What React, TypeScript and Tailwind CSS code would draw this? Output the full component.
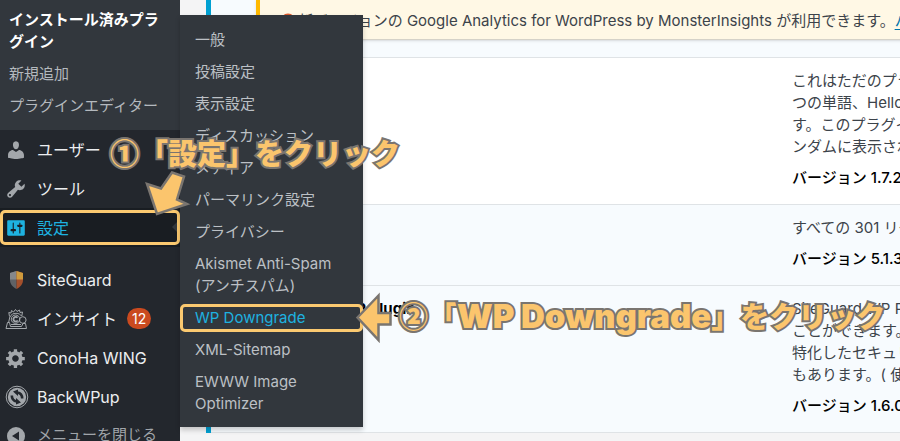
import type { ReactNode } from "react";

const glyphs = {
  user: "M10 9.25c-2.27 0-2.73-3.44-2.73-3.44C7 4.02 7.82 2 9.97 2c2.16 0 2.98 2.02 2.71 3.81 0 0-.41 3.44-2.68 3.44zm0 2.57L12.72 10c2.39 0 4.52 2.33 4.52 4.53v2.49s-3.65 1.13-7.24 1.13c-3.65 0-7.24-1.13-7.24-1.13v-2.49c0-2.25 1.94-4.48 4.47-4.48z",
  tools:
    "M16.68 9.77c-1.34 1.34-3.3 1.67-4.95.99l-5.41 6.52c-.99.99-2.59.99-3.58 0s-.99-2.59 0-3.57l6.52-5.42c-.68-1.65-.35-3.61.99-4.95 1.28-1.28 3.12-1.62 4.72-1.06l-2.89 2.89 2.82 2.82 2.86-2.87c.53 1.58.18 3.39-1.08 4.65zM3.81 16.21c.4.39 1.04.39 1.43 0 .4-.4.4-1.04 0-1.43-.39-.4-1.03-.4-1.43 0-.39.39-.39 1.03 0 1.43z",
  settings:
    "M18 16V4c0-.55-.45-1-1-1H3c-.55 0-1 .45-1 1v12c0 .55.45 1 1 1h14c.55 0 1-.45 1-1zM8 11h1c.55 0 1 .45 1 1s-.45 1-1 1H8v1.5c0 .28-.22.5-.5.5s-.5-.22-.5-.5V13H6c-.55 0-1-.45-1-1s.45-1 1-1h1V5.5c0-.28.22-.5.5-.5s.5.22.5.5V11zm5-2h-1c-.55 0-1-.45-1-1s.45-1 1-1h1V5.5c0-.28.22-.5.5-.5s.5.22.5.5V7h1c.55 0 1 .45 1 1s-.45 1-1 1h-1v5.5c0 .28-.22.5-.5.5s-.5-.22-.5-.5V9z",
  gear: "M18 12h-2.18c-.17.7-.44 1.35-.81 1.93l1.54 1.54-2.1 2.1-1.54-1.54c-.58.36-1.23.63-1.91.79V19H8v-2.18c-.68-.16-1.33-.43-1.91-.79l-1.54 1.54-2.12-2.12 1.54-1.54c-.36-.58-.63-1.23-.79-1.91H1V9.03h2.17c.16-.7.44-1.35.8-1.94L2.43 5.55l2.1-2.1 1.54 1.54c.58-.37 1.24-.64 1.93-.81V2h3v2.18c.68.16 1.33.43 1.91.79l1.54-1.54 2.12 2.12-1.54 1.54c.36.59.64 1.24.8 1.94H18V12zm-8.5 1.5c1.66 0 3-1.34 3-3s-1.34-3-3-3-3 1.34-3 3 1.34 3 3 3z",
};

function Glyph({ d }: { d: string }) {
  return (
    <svg viewBox="0 0 20 20" className="size-[22px]" fill="currentColor" fillRule="evenodd" aria-hidden="true">
      <path d={d} />
    </svg>
  );
}

function ShieldIcon() {
  return (
    <svg viewBox="0 0 22 22" className="size-[22px]" aria-hidden="true">
      <path d="M5 4 11.500 2v18C7.500 18 5 15 5 11Z" fill="#5f6266" />
      <path d="M5 4l6.500-2v8.500H5Z" fill="#85878a" />
      <path d="M11.500 2 18 4v7c0 4-2.500 7-6.500 9Z" fill="#a4502c" />
      <path d="M11.500 2 18 4v6.500h-6.500Z" fill="#cf9a3c" />
    </svg>
  );
}

function MonsterIcon() {
  return (
    <svg viewBox="0 0 22 22" className="size-[22px]" fill="none" stroke="currentColor" strokeWidth="1" strokeLinejoin="round" aria-hidden="true">
      <path d="M4.500 8.500 3.800 4.500 6 5l.5-2.500 2 1.500L10.500 1.500l1.500 2 2.500-1.500.5 2.500 2.500-.5-.7 4" />
      <path d="M5 9c1-2.500 3.200-3.700 6-3.700S15.500 6.500 16.500 8" />
      <circle cx="10.500" cy="11.200" r="4.200" />
      <path d="M12.500 9.800a2.300 2.300 0 1 0 .2 2.600" strokeWidth="1.800" />
      <circle cx="17.800" cy="12" r="3.300" />
      <path d="M4.800 9 3.500 15M1 20.500l1.500-6h2l1 4h11l1.500-3h2.500l1 5Z" />
      <path d="M6 16.500h10" />
    </svg>
  );
}

function BackupIcon() {
  return (
    <svg viewBox="0 0 24 24" className="size-[24px]" aria-hidden="true">
      <circle cx="12" cy="12" r="10.800" fill="none" stroke="currentColor" strokeWidth="1" />
      <circle cx="12" cy="12" r="9.200" fill="currentColor" />
      <g fill="none" stroke="#23272d" strokeWidth="2.600">
        <path d="M6.800 10.500c0 3 2 5.500 5 6" />
        <path d="M17.200 13.500c0-3-2-5.500-5-6" />
      </g>
      <path d="M11 13v6.500l5-2zM13 11V4.500l-5 2z" fill="#23272d" />
    </svg>
  );
}

function CollapseIcon() {
  return (
    <svg viewBox="0 0 22 22" className="size-[22px]" aria-hidden="true">
      <circle cx="11" cy="11" r="9" fill="currentColor" />
      <path d="M14 6.500v9L7 11Z" fill="#23272d" />
    </svg>
  );
}

type MenuRowProps = { icon: ReactNode; label: string; tone?: string; children?: ReactNode };

function MenuRow({ icon, label, tone = "text-base text-[#eceef0]", children }: MenuRowProps) {
  return (
    <li>
      <a href="#" className={`flex h-[39px] items-center pl-[5px] whitespace-nowrap ${tone}`}>
        <span className="flex w-8 shrink-0 items-center pr-2 text-[#a3a7ab]">{icon}</span>
        {label}
        {children}
      </a>
    </li>
  );
}

const optionPages = [
  "一般",
  "投稿設定",
  "表示設定",
  "ディスカッション",
  "メディア",
  "パーマリンク設定",
  "プライバシー",
  "Akismet Anti-Spam (アンチスパム)",
  "WP Downgrade",
  "XML-Sitemap",
  "EWWW Image Optimizer",
];

const highlight = "pointer-events-none absolute inset-x-0 inset-y-[2px] rounded-[5px] border-[3px] border-[#fbc970]";

function SettingsFlyout() {
  return (
    <ul className="absolute top-[15px] left-[180px] z-10 w-[183px] bg-[#32373d] pt-[9px] pb-[7px] text-[#bcc0c5] shadow-[0_3px_5px_rgba(0,0,0,0.2)]">
      {optionPages.map((page) => (
        <li key={page} className="relative">
          <a
            href="#"
            className={`block px-[15px] py-[5px] leading-[22px] ${page === "WP Downgrade" ? "text-[#1eb2e0]" : ""}`}
          >
            {page}
          </a>
          {page === "WP Downgrade" && <span className={highlight} />}
        </li>
      ))}
    </ul>
  );
}

function Sidebar() {
  return (
    <nav className="w-[180px] shrink-0 bg-[#23272d]">
      <ul className="bg-[#32373d] pt-1 pb-2 text-[#b4b9be]">
        <li>
          <a href="#" className="block px-[9px] py-[5px] leading-[22px] font-bold text-white">
            インストール済みプラグイン
          </a>
        </li>
        <li>
          <a href="#" className="block px-[9px] py-[5px] leading-[22px]">新規追加</a>
        </li>
        <li>
          <a href="#" className="block px-[9px] py-[5px] leading-[22px]">プラグインエディター</a>
        </li>
      </ul>
      <ul>
        <MenuRow icon={<Glyph d={glyphs.user} />} label="ユーザー" />
        <MenuRow icon={<Glyph d={glyphs.tools} />} label="ツール" />
        <li className="relative bg-[#191d22]">
          <a href="#" className="flex h-[39px] items-center pl-[5px] text-base text-[#1eb2e0]">
            <span className="w-8">
              <Glyph d={glyphs.settings} />
            </span>
            設定
          </a>
          <span className="absolute top-[11px] right-0 border-y-8 border-r-8 border-y-transparent border-r-[#32373d]" />
          <span className={highlight} />
        </li>
      </ul>
      <ul className="mt-[13px]">
        <MenuRow icon={<ShieldIcon />} label="SiteGuard" />
        <MenuRow icon={<MonsterIcon />} label="インサイト">
          <span className="ml-[10px] rounded-full bg-[#ca4a1f] px-[5px] text-sm leading-[21px] text-white">12</span>
        </MenuRow>
        <MenuRow icon={<Glyph d={glyphs.gear} />} label="ConoHa WING" />
        <MenuRow icon={<BackupIcon />} label="BackWPup" />
        <MenuRow icon={<CollapseIcon />} label="メニューを閉じる" tone="text-[15px] text-[#a0a5aa]" />
      </ul>
    </nav>
  );
}

type PluginRowProps = { name: string; lines: string[]; version: string; active?: boolean };

function PluginRow({ name, lines, version, active }: PluginRowProps) {
  return (
    <tr className={`border-b border-[#dfe3e6] align-top ${active ? "bg-[#f7fbfe]" : "bg-white"}`}>
      <td className={`border-l-[5px] ${active ? "border-l-[#00a0d2]" : "border-l-white"}`} />
      <th scope="row" className="pt-3 text-left leading-[22px] font-bold text-black">
        {name}
      </th>
      <td className="pt-3 pb-[15px] leading-[22px] whitespace-nowrap text-[#3c434a]">
        {lines.map((line) => (
          <p key={line}>{line}</p>
        ))}
        <p className="mt-[9px] font-medium text-black">{version}</p>
      </td>
    </tr>
  );
}

function PluginTable() {
  return (
    <main className="min-w-0 flex-1 overflow-hidden bg-[#f4f4f5] pl-[26px]">
      <div className="flex h-[58px] items-start border-b border-l-[5px] border-b-[#dfe3e6] border-l-[#00a0d2] bg-[#f7fbfe] pl-[45px]">
        <div className="flex h-10 flex-1 items-center border-b border-l-4 border-b-[#d5d2c8] border-l-[#ffb900] bg-[#fff8e5] pt-[3px] pl-5 whitespace-nowrap text-[#3c434a] shadow-sm">
          <svg viewBox="0 0 16 16" className="mr-[2px] size-4 shrink-0" aria-hidden="true">
            <circle cx="8" cy="8" r="6" fill="none" stroke="#dd5a2c" strokeWidth="3" />
          </svg>
          <p>
            新バージョンの Google Analytics for WordPress by MonsterInsights が利用できます。
            <a href="#" className="text-[#0073aa] underline underline-offset-3">バージョン</a>
          </p>
        </div>
      </div>
      <table className="w-full table-fixed border-collapse">
        <colgroup>
          <col className="w-[56px]" />
          <col />
          <col className="w-[108px]" />
        </colgroup>
        <tbody>
          <PluginRow
            name="Hello Dolly"
            lines={["これはただのプラグ", "つの単語、Hello, ", "す。このプラグイン", "ンダムに表示されま"]}
            version="バージョン 1.7.2"
          />
          <PluginRow name="Redirection" lines={["すべての 301 リダイ"]} version="バージョン 5.1.3" active />
          <PluginRow
            name="SiteGuard WP Plugin"
            lines={["SiteGuard WP Plu", "ことができます。Si", "特化したセキュリテ", "もあります。( 使用"]}
            version="バージョン 1.6.0"
            active
          />
        </tbody>
      </table>
    </main>
  );
}

const callout =
  "pointer-events-none absolute z-20 font-['Noto_Sans_CJK_JP',sans-serif] text-[29px] leading-[36px] font-black whitespace-nowrap text-[#fbc56d] [-webkit-text-stroke:4px_#7a7570] [paint-order:stroke_fill]";

function Callouts() {
  return (
    <>
      <p className={`${callout} top-[134px] left-[110px]`}>①「設定」をクリック</p>
      <p className={`${callout} top-[297px] left-[399px]`}>
        ②「
        <span className="font-[Inter,sans-serif] text-[33px] font-black">WP Downgrade</span>
        」をクリック
      </p>
      <svg
        viewBox="0 0 900 441"
        className="pointer-events-none absolute top-0 left-0 z-20 h-[441px] w-[900px]"
        fill="#fbc56d"
        stroke="#7a7570"
        strokeWidth="2.500"
        aria-hidden="true"
      >
        <path d="M172 172.500 184 176.500 177 199.500 187 204 157 214 147 184 161 188.500Z" />
        <path d="M357.500 317.500 378.500 295.500V313H390.500V324.500H378.500V340Z" />
      </svg>
    </>
  );
}

export default function App() {
  return (
    <div className="relative flex h-screen overflow-hidden font-[Inter,'Noto_Sans_CJK_JP',sans-serif] text-[15px]">
      <Sidebar />
      <SettingsFlyout />
      <PluginTable />
      <Callouts />
    </div>
  );
}
